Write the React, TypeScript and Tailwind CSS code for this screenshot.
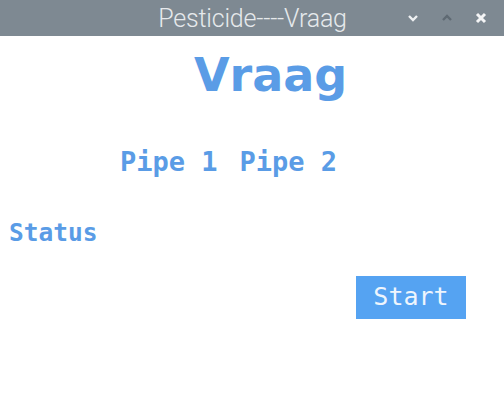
import React from "react";

export default function App() {
  return (
    <div className="w-[504px] h-[416px] bg-white flex flex-col overflow-hidden">
      <div className="h-[36px] bg-[#7e8992] flex items-center relative shrink-0">
        <div className="absolute left-0 right-0 top-0 h-full flex items-center justify-center pl-[1px]">
          <span className="text-[25px] text-[#e6e9ec] font-['Roboto',sans-serif] font-light leading-none tracking-[-0.2px]">Pesticide----Vraag</span>
        </div>
        <div className="ml-auto flex items-center gap-[22px] pr-[17px] relative">
          <svg width="12" height="10" viewBox="0 0 12 10"><path d="M2 3 L6 7 L10 3" stroke="#eef0f2" strokeWidth="2.4" fill="none" /></svg>
          <svg width="12" height="10" viewBox="0 0 12 10"><path d="M2 7 L6 3 L10 7" stroke="#5f6a73" strokeWidth="2.4" fill="none" /></svg>
          <svg width="12" height="12" viewBox="0 0 12 12"><path d="M2 2 L10 10 M10 2 L2 10" stroke="#f4f5f6" strokeWidth="3" fill="none" /></svg>
        </div>
      </div>
      <div className="flex-1 flex flex-col font-['DejaVu_Sans_Mono',monospace] text-[#5a9ce6]">
        <div className="pl-[194px] pt-[16px] h-[64px] font-['DejaVu_Sans',sans-serif] font-bold text-[46px] leading-none">Vraag</div>
        <div className="pl-[120px] pt-[48px] flex gap-[22px] font-bold text-[27px] leading-none">
          <span>Pipe 1</span>
          <span>Pipe 2</span>
        </div>
        <div className="pl-[9px] pt-[46px] font-bold text-[24.5px] leading-none">Status</div>
        <div className="pl-[356px] pt-[30px]">
          <div className="w-[110px] h-[43px] bg-[#55a3f2] text-[#eef5fd] text-[25px] flex items-center justify-center">Start</div>
        </div>
      </div>
    </div>
  );
}
